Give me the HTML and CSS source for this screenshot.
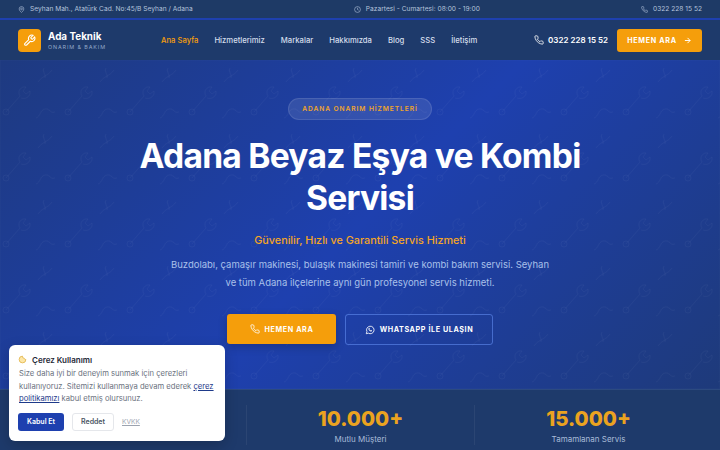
FILE: index.html
```html
<!DOCTYPE html>
<html lang="tr">
<head>
    <meta charset="UTF-8">
    <meta name="viewport" content="width=device-width, initial-scale=1.0">
    <title>Ada Teknik</title>
    <link rel="stylesheet" href="styles.css">
</head>
<body>
    <!-- Top bar -->
    <div class="topbar">
        <span class="topbar-item">
            <svg class="top-icon" viewBox="0 0 24 24"><path d="M20 10c0 6-8 12-8 12s-8-6-8-12a8 8 0 0 1 16 0z"/><circle cx="12" cy="10" r="3"/></svg>
            Seyhan Mah., Atatürk Cad. No:45/B Seyhan / Adana
        </span>
        <span class="topbar-item">
            <svg class="top-icon" viewBox="0 0 24 24"><circle cx="12" cy="12" r="10"/><path d="M12 6v6l4 2"/></svg>
            Pazartesi - Cumartesi: 08:00 - 19:00
        </span>
        <span class="topbar-item">
            <svg class="top-icon" viewBox="0 0 24 24"><path d="M22 16.9v3a2 2 0 0 1-2.2 2 19.8 19.8 0 0 1-8.6-3.1 19.5 19.5 0 0 1-6-6A19.8 19.8 0 0 1 2.1 4.2 2 2 0 0 1 4.1 2h3a2 2 0 0 1 2 1.7c.1 1 .4 1.9.7 2.8a2 2 0 0 1-.5 2.1L8.1 9.9a16 16 0 0 0 6 6l1.3-1.3a2 2 0 0 1 2.1-.4c.9.3 1.8.6 2.8.7a2 2 0 0 1 1.7 2z"/></svg>
            0322 228 15 52
        </span>
    </div>

    <!-- Header -->
    <header class="site-header">
        <div class="brand">
            <div class="brand-icon">
                <svg viewBox="0 0 24 24"><path d="M14.7 6.3a1 1 0 0 0 0 1.4l1.6 1.6a1 1 0 0 0 1.4 0l3.8-3.8a6 6 0 0 1-7.9 7.9l-6.9 6.9a2.1 2.1 0 0 1-3-3l6.9-6.9a6 6 0 0 1 7.9-7.900z"/></svg>
            </div>
            <div>
                <div class="brand-name">Ada Teknik</div>
                <div class="brand-sub">ONARIM &amp; BAKIM</div>
            </div>
        </div>
        <nav class="main-nav">
            <a class="active">Ana Sayfa</a>
            <a>Hizmetlerimiz</a>
            <a>Markalar</a>
            <a>Hakkımızda</a>
            <a>Blog</a>
            <a>SSS</a>
            <a>İletişim</a>
        </nav>
        <div class="header-right">
            <span class="header-phone">
                <svg viewBox="0 0 24 24"><path d="M22 16.9v3a2 2 0 0 1-2.2 2 19.8 19.8 0 0 1-8.6-3.1 19.5 19.5 0 0 1-6-6A19.8 19.8 0 0 1 2.1 4.2 2 2 0 0 1 4.1 2h3a2 2 0 0 1 2 1.7c.1 1 .4 1.9.7 2.8a2 2 0 0 1-.5 2.1L8.1 9.9a16 16 0 0 0 6 6l1.3-1.3a2 2 0 0 1 2.1-.4c.9.3 1.8.6 2.8.7a2 2 0 0 1 1.7 2z"/></svg>
                0322 228 15 52
            </span>
            <a class="header-cta">HEMEN ARA
                <svg viewBox="0 0 24 24"><path d="M5 12h14M12 5l7 7-7 7"/></svg>
            </a>
        </div>
    </header>

    <!-- Hero -->
    <section class="hero">
        <svg class="hero-pattern" width="720" height="329">
            <defs>
                <pattern id="toolTile" width="62" height="66" patternUnits="userSpaceOnUse">
                    <path d="M6 52l14-16M20 36c-3-5 1-10 6-9l-3 4 3 3 4-3c1 5-4 9-9 7"/>
                    <path d="M38 22c4-6 10-6 14-12M44 8c-2 4 2 6 1 10"/>
                    <path d="M36 58c5-2 4-8 9-9s5 5 10 3"/>
                    <circle cx="6" cy="52" r="3"/>
                </pattern>
            </defs>
            <rect width="720" height="329" fill="url(#toolTile)"/>
        </svg>
        <div class="hero-content">
            <span class="hero-badge">ADANA ONARIM HİZMETLERİ</span>
            <h1>Adana Beyaz Eşya ve Kombi Servisi</h1>
            <p class="hero-lead">Güvenilir, Hızlı ve Garantili Servis Hizmeti</p>
            <p class="hero-text">Buzdolabı, çamaşır makinesi, bulaşık makinesi tamiri ve kombi bakım servisi. Seyhan ve tüm Adana ilçelerine aynı gün profesyonel servis hizmeti.</p>
            <div class="hero-buttons">
                <a class="btn btn-primary">
                    <svg viewBox="0 0 24 24"><path d="M22 16.9v3a2 2 0 0 1-2.2 2 19.8 19.8 0 0 1-8.6-3.1 19.5 19.5 0 0 1-6-6A19.8 19.8 0 0 1 2.1 4.2 2 2 0 0 1 4.1 2h3a2 2 0 0 1 2 1.7c.1 1 .4 1.9.7 2.8a2 2 0 0 1-.5 2.1L8.1 9.9a16 16 0 0 0 6 6l1.3-1.3a2 2 0 0 1 2.1-.4c.9.3 1.8.6 2.8.7a2 2 0 0 1 1.7 2z"/></svg>
                    HEMEN ARA
                </a>
                <a class="btn btn-outline">
                    <svg viewBox="0 0 24 24"><path d="M3 21l1.6-5.2A9 9 0 1 1 8 19.6z"/><path class="wa-handset" d="M9 7.500c-1.300.8-1 2.900.8 5s3.800 3.600 5.400 3 1.700-1.800 1.500-2.300l-2.200-1.100-1 1.100c-1.100-.4-2.600-1.800-3-3l1-1-1-2.300c-.4-.3-.9-.1-1.500.6z"/></svg>
                    WHATSAPP İLE ULAŞIN
                </a>
            </div>
        </div>
    </section>

    <!-- Stats -->
    <section class="stats">
        <div class="stat"></div>
        <div class="stat">
            <div class="stat-number">10.000+</div>
            <div class="stat-label">Mutlu Müşteri</div>
        </div>
        <div class="stat">
            <div class="stat-number">15.000+</div>
            <div class="stat-label">Tamamlanan Servis</div>
        </div>
    </section>

    <!-- Cookie notice -->
    <div class="cookie-box">
        <div class="cookie-title">
            <svg viewBox="0 0 24 24"><path d="M12 3a9 9 0 1 0 9 9 4 4 0 0 1-4.500-3.500A4.500 4.500 0 0 1 12 3z"/></svg>
            Çerez Kullanımı
        </div>
        <p class="cookie-text">Size daha iyi bir deneyim sunmak için çerezleri kullanıyoruz. Sitemizi kullanmaya devam ederek <a>çerez</a> <a>politikamızı</a> kabul etmiş olursunuz.</p>
        <div class="cookie-actions">
            <button class="cookie-accept">Kabul Et</button>
            <button class="cookie-reject">Reddet</button>
            <a class="cookie-link">KVKK</a>
        </div>
    </div>
</body>
</html>
```

FILE: styles.css
```css
* {
    box-sizing: border-box;
}

body {
    margin: 0;
    width: 720px;
    height: 450px;
    overflow: hidden;
    font-family: Inter, "Liberation Sans", sans-serif;
    background: #1e40af;
    color: #fff;
    display: flex;
    flex-direction: column;
    position: relative;
}

a {
    text-decoration: none;
}

/* Top bar */
.topbar {
    height: 18px;
    padding: 0 18px;
    background: #1e3a66;
    display: flex;
    justify-content: space-between;
    align-items: center;
    font-size: 6.6px;
    letter-spacing: 0.02px;
    color: #b5c4dc;
}

.topbar-item {
    display: flex;
    align-items: center;
    gap: 5px;
}

.top-icon {
    width: 7px;
    height: 7px;
    fill: none;
    stroke: #b5c4dc;
    stroke-width: 2;
}

/* Header */
.site-header {
    height: 40px;
    margin-top: 2px;
    padding: 0 18px;
    background: #1e3a6b;
    display: flex;
    align-items: center;
}

.brand {
    display: flex;
    align-items: center;
    gap: 7px;
    width: 143px;
}

.brand-icon {
    width: 23px;
    height: 23px;
    border-radius: 4px;
    background: #f59e0b;
    display: flex;
    align-items: center;
    justify-content: center;
}

.brand-icon svg {
    width: 13px;
    height: 13px;
    fill: none;
    stroke: #fff;
    stroke-width: 2;
}

.brand-name {
    font-size: 9.9px;
    font-weight: 700;
    line-height: 13px;
}

.brand-sub {
    font-size: 5.4px;
    letter-spacing: 0.9px;
    color: #93a9c9;
    line-height: 8px;
}

.main-nav {
    display: flex;
    gap: 16px;
    font-size: 7.7px;
    font-weight: 500;
    color: #d5deeb;
}

.main-nav .active {
    color: #f59e0b;
}

.header-right {
    margin-left: auto;
    display: flex;
    align-items: center;
    gap: 9px;
}

.header-phone {
    display: flex;
    align-items: center;
    gap: 4px;
    font-size: 8px;
    font-weight: 600;
}

.header-phone svg {
    width: 10px;
    height: 10px;
    fill: none;
    stroke: #fff;
    stroke-width: 2;
}

.header-cta {
    width: 85px;
    height: 23px;
    border-radius: 3px;
    background: #f59e0b;
    color: #fff;
    font-size: 7.2px;
    font-weight: 700;
    letter-spacing: 0.7px;
    display: flex;
    align-items: center;
    justify-content: center;
    gap: 6px;
}

.header-cta svg {
    width: 9px;
    height: 9px;
    fill: none;
    stroke: #fff;
    stroke-width: 2.5;
}

/* Hero */
.hero {
    height: 329px;
    position: relative;
    background: linear-gradient(135deg, #1e3a80 0%, #1e40af 50%, #1e3a7a 100%);
    display: flex;
    justify-content: center;
}

.hero-pattern {
    position: absolute;
    left: 0;
    top: 0;
    fill: none;
    stroke: rgba(255, 255, 255, 0.03);
    stroke-width: 1;
}

.hero-content {
    position: relative;
    width: 480px;
    padding-top: 38px;
    display: flex;
    flex-direction: column;
    align-items: center;
    text-align: center;
}

.hero-badge {
    height: 22px;
    padding: 0 13px;
    border-radius: 11px;
    background: rgba(255, 255, 255, 0.1);
    border: 1px solid rgba(255, 255, 255, 0.1);
    color: #f0a52a;
    font-size: 6.6px;
    font-weight: 600;
    letter-spacing: 0.95px;
    display: flex;
    align-items: center;
}

.hero h1 {
    margin: 15px 0 0;
    font-size: 33.6px;
    line-height: 42px;
    font-weight: 700;
    letter-spacing: -0.75px;
}

.hero-lead {
    margin: 14px 0 0;
    font-size: 10.8px;
    line-height: 16px;
    font-weight: 500;
    color: #f5a524;
}

.hero-text {
    margin: 7px 0 0;
    width: 384px;
    font-size: 9.5px;
    line-height: 18px;
    color: #a9c0ea;
}

.hero-buttons {
    margin-top: 22px;
    display: flex;
    gap: 9px;
}

.btn {
    height: 30px;
    border-radius: 3px;
    font-size: 7.2px;
    font-weight: 700;
    letter-spacing: 0.6px;
    color: #fff;
    display: flex;
    align-items: center;
    justify-content: center;
    gap: 5px;
}

.btn svg {
    width: 10px;
    height: 10px;
    fill: none;
    stroke: #fff;
    stroke-width: 2;
}

.btn svg .wa-handset {
    fill: #fff;
    stroke: none;
}

.btn-primary {
    width: 109px;
    background: #f59e0b;
    box-shadow: 0 3px 10px rgba(0, 0, 0, 0.2);
}

.btn-outline {
    width: 148px;
    height: 31px;
    border: 1px solid rgba(96, 140, 240, 0.6);
}

/* Stats */
.stats {
    flex: 1;
    padding: 15px 18px 0;
    background: #1e3a6b;
    border-top: 1px solid #2c4a80;
    display: grid;
    grid-template-columns: repeat(3, 1fr);
}

.stat {
    text-align: center;
    height: 40px;
    border-left: 1px solid rgba(255, 255, 255, 0.06);
}

.stat:first-child {
    border-left: none;
}

.stat-number {
    font-size: 20.4px;
    line-height: 27px;
    font-weight: 800;
    color: #eba320;
}

.stat-label {
    margin-top: 2px;
    font-size: 8px;
    line-height: 11px;
    color: #a9bcd8;
}

/* Cookie notice */
.cookie-box {
    position: absolute;
    left: 9px;
    top: 345px;
    width: 216px;
    height: 96px;
    padding: 9px;
    border-radius: 6px;
    background: #fff;
    box-shadow: 0 4px 14px rgba(0, 0, 0, 0.2);
    color: #6b7280;
}

.cookie-title {
    display: flex;
    align-items: center;
    gap: 5px;
    height: 11px;
    font-size: 8px;
    font-weight: 600;
    color: #1f2937;
}

.cookie-title svg {
    width: 9px;
    height: 9px;
    fill: #fde7a8;
    stroke: #e0b040;
    stroke-width: 2;
}

.cookie-text {
    margin: 3px 0 0 1px;
    font-size: 7.65px;
    line-height: 12.6px;
}

.cookie-text a {
    color: #1e3a8a;
    text-decoration: underline;
}

.cookie-actions {
    margin-top: 7px;
    display: flex;
    align-items: center;
    gap: 8px;
}

.cookie-actions button {
    height: 18px;
    border-radius: 3px;
    font-family: inherit;
    font-size: 7px;
    font-weight: 600;
    padding: 0;
}

.cookie-accept {
    width: 46px;
    border: none;
    background: #1e40af;
    color: #fff;
}

.cookie-reject {
    width: 42px;
    border: 1px solid #e5e7eb;
    background: #fff;
    color: #4b5563;
}

.cookie-link {
    font-size: 6.6px;
    color: #9ca3af;
    text-decoration: underline;
}
```
